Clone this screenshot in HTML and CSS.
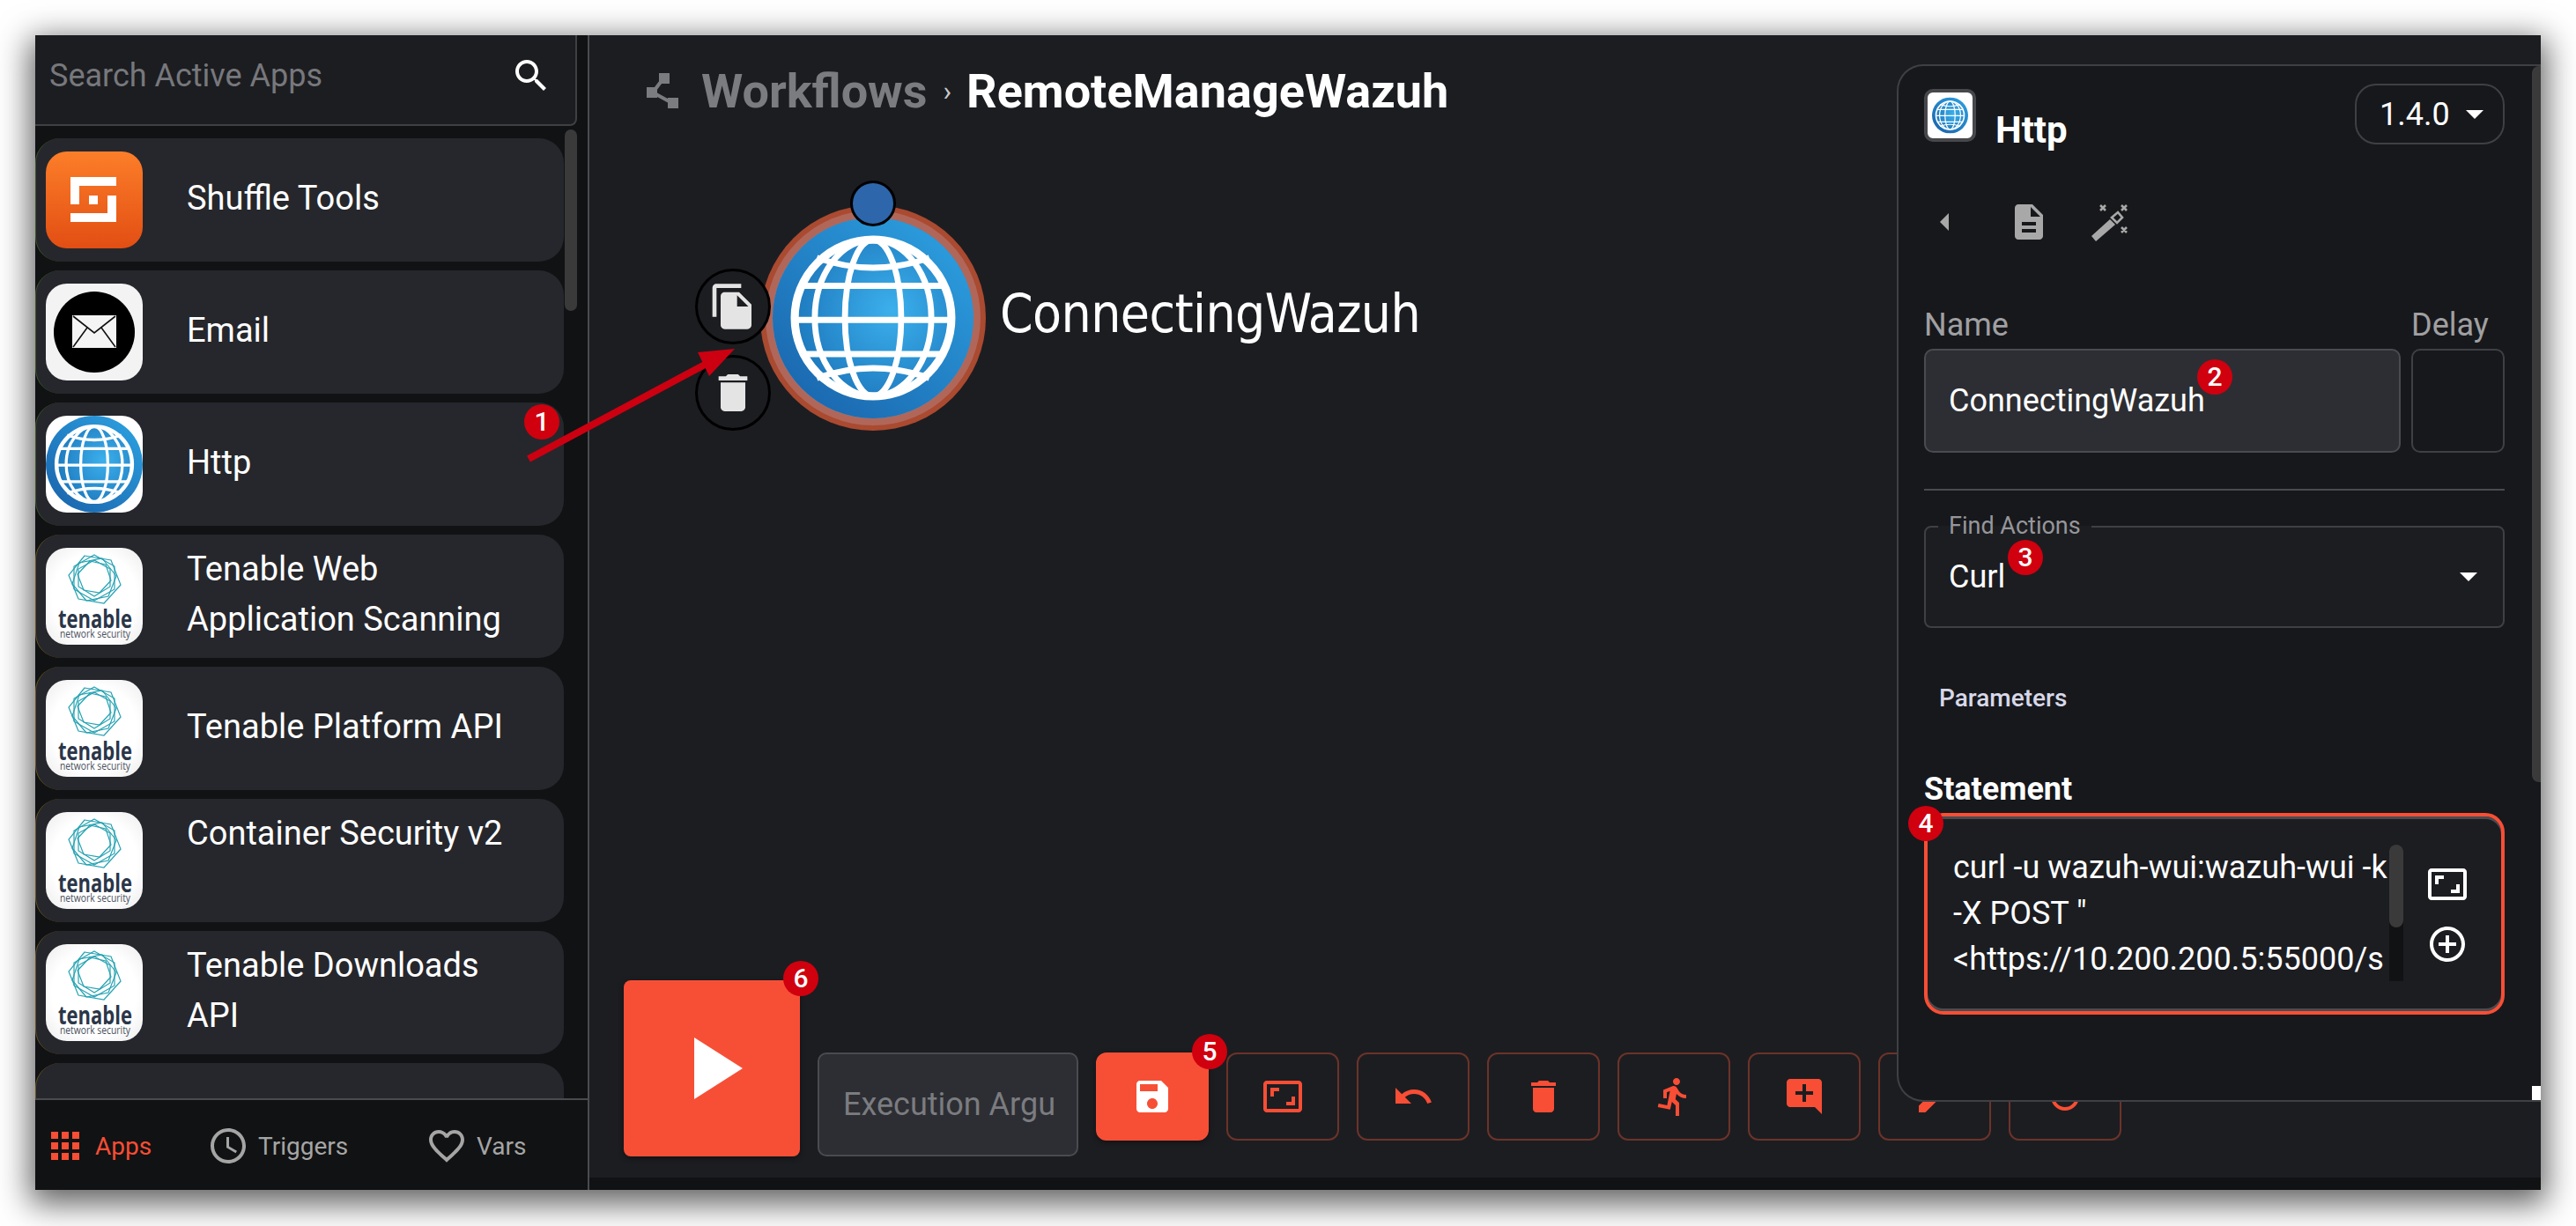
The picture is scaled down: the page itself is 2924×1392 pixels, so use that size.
FILE: index.html
```html
<!DOCTYPE html>
<html lang="en">
<head>
<meta charset="utf-8">
<title>RemoteManageWazuh</title>
<link rel="stylesheet" href="styles.css">
</head>
<body>
<svg class="defs" width="0" height="0" aria-hidden="true">
  <defs>
    <radialGradient id="globeFill" cx="62%" cy="45%" r="60%">
      <stop offset="0" stop-color="#3cb0ec"/>
      <stop offset="1" stop-color="#1f7cc0"/>
    </radialGradient>
    <linearGradient id="ringFill" x1="0.85" y1="0.1" x2="0.15" y2="0.9">
      <stop offset="0" stop-color="#2b9bdc"/>
      <stop offset="1" stop-color="#1b69b0"/>
    </linearGradient>
    <symbol id="globe" viewBox="0 0 100 100">
      <circle cx="50" cy="50" r="50" fill="url(#ringFill)"/>
      <circle cx="50" cy="50" r="39" fill="url(#globeFill)" stroke="#fff" stroke-width="4"/>
      <g fill="none" stroke="#fff" stroke-width="3">
        <ellipse cx="50" cy="50" rx="14" ry="39"/>
        <ellipse cx="50" cy="50" rx="29" ry="39"/>
        <path d="M14 34H86M11 51H89M14 68H86M22 20q28 10 56 0M22 80q28-10 56 0"/>
      </g>
    </symbol>
    <symbol id="tenable" viewBox="0 0 110 110">
      <g fill="none" stroke="#27a3b3" stroke-width="1.2">
        <polygon points="44,9 74,14 85,42 66,63 37,58 26,31"/>
        <polygon points="55,8 78,21 78,47 55,60 32,47 32,21"/>
        <polygon points="64,12 80,32 71,55 46,60 30,41 38,17"/>
        <polygon points="55,14 73,24 73,44 55,55 37,44 37,24"/>
        <polygon points="50,15 68,19 74,37 61,51 43,48 36,30"/>
      </g>
      <text class="ten-main" x="56" y="91" text-anchor="middle" textLength="84" lengthAdjust="spacingAndGlyphs">tenable</text>
      <text class="ten-sub" x="56" y="102" text-anchor="middle" textLength="80" lengthAdjust="spacingAndGlyphs">network security</text>
    </symbol>
  </defs>
</svg>

<div class="frame">
  <aside class="sidebar">
    <div class="search">
      <span class="search-text">Search Active Apps</span>
      <svg class="ic48 white" viewBox="0 0 24 24"><path d="M15.5 14h-.79l-.28-.27C15.41 12.59 16 11.11 16 9.5 16 5.91 13.09 3 9.5 3S3 5.91 3 9.5 5.91 16 9.5 16c1.61 0 3.09-.59 4.23-1.57l.27.28v.79l5 4.99L20.49 19l-4.99-5zm-6 0C7.01 14 5 11.99 5 9.5S7.01 5 9.5 5 14 7.01 14 9.5 11.99 14 9.5 14z"/></svg>
    </div>
    <div class="list-area">
      <div class="app-list">
        <div class="app-item edge-green">
          <svg class="app-icon" viewBox="0 0 110 110">
            <defs><linearGradient id="shuf" x1="0" y1="0" x2="0" y2="1"><stop offset="0" stop-color="#fc7e29"/><stop offset="1" stop-color="#e24e13"/></linearGradient></defs>
            <rect width="110" height="110" fill="url(#shuf)"/>
            <path fill="#fff" d="M28 29H80V39H38V60H28ZM49 50H59V60H49ZM70 50H80V80H28V70H70Z"/>
          </svg>
          <span class="app-name">Shuffle Tools</span>
        </div>
        <div class="app-item edge-green">
          <svg class="app-icon" viewBox="0 0 110 110">
            <rect width="110" height="110" fill="#f3f3f3"/>
            <circle cx="55" cy="55" r="46" fill="#000"/>
            <rect x="30" y="36" width="50" height="37" fill="#f4f4f4"/>
            <path d="M31 37 55 56 79 37M31 72 47 50M79 72 63 50" fill="none" stroke="#111" stroke-width="1.6"/>
          </svg>
          <span class="app-name">Email</span>
        </div>
        <div class="app-item edge-green">
          <svg class="app-icon white-bg" viewBox="0 0 100 100"><use href="#globe"/></svg>
          <span class="app-name">Http</span>
        </div>
        <div class="app-item edge-amber">
          <svg class="app-icon ten-bg" viewBox="0 0 110 110"><use href="#tenable"/></svg>
          <span class="app-name">Tenable Web Application Scanning</span>
        </div>
        <div class="app-item edge-amber">
          <svg class="app-icon ten-bg" viewBox="0 0 110 110"><use href="#tenable"/></svg>
          <span class="app-name">Tenable Platform API</span>
        </div>
        <div class="app-item edge-amber top-text">
          <svg class="app-icon ten-bg" viewBox="0 0 110 110"><use href="#tenable"/></svg>
          <span class="app-name">Container Security v2</span>
        </div>
        <div class="app-item edge-amber">
          <svg class="app-icon ten-bg" viewBox="0 0 110 110"><use href="#tenable"/></svg>
          <span class="app-name">Tenable Downloads API</span>
        </div>
        <div class="app-item edge-amber"></div>
      </div>
      <div class="list-thumb"></div>
    </div>
    <nav class="tabs">
      <div class="tab active">
        <svg class="ic48" viewBox="0 0 24 24"><path d="M4 8h4V4H4v4zm6 12h4v-4h-4v4zm-6 0h4v-4H4v4zm0-6h4v-4H4v4zm6 0h4v-4h-4v4zm6-10v4h4V4h-4zm-6 4h4V4h-4v4zm6 6h4v-4h-4v4zm0 6h4v-4h-4v4z"/></svg>
        <span>Apps</span>
      </div>
      <div class="tab">
        <svg class="ic48" viewBox="0 0 24 24"><path d="M11.99 2C6.47 2 2 6.48 2 12s4.47 10 9.99 10C17.52 22 22 17.52 22 12S17.52 2 11.99 2zM12 20c-4.42 0-8-3.58-8-8s3.58-8 8-8 8 3.58 8 8-3.58 8-8 8zm.5-13H11v6l5.25 3.15.75-1.23-4.5-2.67z"/></svg>
        <span>Triggers</span>
      </div>
      <div class="tab">
        <svg class="ic48" viewBox="0 0 24 24"><path d="M16.5 3c-1.74 0-3.41.81-4.5 2.09C10.91 3.81 9.24 3 7.5 3 4.42 3 2 5.42 2 8.5c0 3.78 3.4 6.86 8.55 11.54L12 21.35l1.45-1.32C18.6 15.36 22 12.28 22 8.5 22 5.42 19.58 3 16.5 3zm-4.4 15.55l-.1.1-.1-.1C7.14 14.24 4 11.39 4 8.5 4 6.5 5.5 5 7.5 5c1.54 0 3.04.99 3.57 2.36h1.87C13.46 5.99 14.96 5 16.5 5c2 0 3.5 1.5 3.5 3.5 0 2.89-3.14 5.74-7.9 10.05z"/></svg>
        <span>Vars</span>
      </div>
    </nav>
  </aside>

  <main class="main">
    <header class="crumbs">
      <svg class="crumb-icon" viewBox="0 0 38 40">
        <path d="M8 22 20 6M8 22 30 34" stroke="#7b7c80" stroke-width="4" fill="none"/>
        <rect x="15" y="0" width="12" height="12" fill="#7b7c80"/>
        <rect x="1" y="16" width="12" height="12" fill="#7b7c80"/>
        <rect x="25" y="28" width="12" height="12" fill="#7b7c80"/>
      </svg>
      <span class="crumb-muted">Workflows</span>
      <span class="crumb-sep">›</span>
      <span class="crumb-title">RemoteManageWazuh</span>
    </header>

    <section class="canvas">
      <div class="node-ring">
        <svg class="node-globe" viewBox="0 0 100 100"><use href="#globe"/></svg>
      </div>
      <div class="node-port"></div>
      <div class="node-btn copy">
        <svg viewBox="0 0 24 24"><path fill="#e4e4e4" d="M16 1H4c-1.1 0-2 .9-2 2v14h2V3h12V1zm-1 4 6 6v10c0 1.1-.9 2-2 2H7.99C6.89 23 6 22.1 6 21l.01-14c0-1.1.89-2 1.99-2h7zm-1 7h5.5L14 6.5V12z"/></svg>
      </div>
      <div class="node-btn trash">
        <svg viewBox="0 0 24 24"><path fill="#e4e4e4" d="M6 19c0 1.1.9 2 2 2h8c1.1 0 2-.9 2-2V7H6v12zM19 4h-3.5l-1-1h-5l-1 1H5v2h14V4z"/></svg>
      </div>
      <div class="node-label">ConnectingWazuh</div>
    </section>

    <footer class="toolbar">
      <button class="play" type="button">
        <svg viewBox="0 0 55 70"><path fill="#fff" d="M0 0 55 35 0 70Z"/></svg>
      </button>
      <div class="exec-args"><span>Execution Argu</span></div>
      <div class="tools">
        <button class="tool solid" type="button"><svg class="ic48" viewBox="0 0 24 24"><path d="M17 3H5c-1.11 0-2 .9-2 2v14c0 1.1.89 2 2 2h14c1.1 0 2-.9 2-2V7l-4-4zm-5 16c-1.66 0-3-1.34-3-3s1.34-3 3-3 3 1.34 3 3-1.34 3-3 3zm3-10H5V5h10v4z"/></svg></button>
        <button class="tool" type="button"><svg class="ic48" viewBox="0 0 24 24"><path d="M19 12h-2v3h-3v2h5v-5zM7 9h3V7H5v5h2V9zm14-6H3c-1.1 0-2 .9-2 2v14c0 1.1.9 2 2 2h18c1.1 0 2-.9 2-2V5c0-1.1-.9-2-2-2zm0 16.01H3V4.99h18v14.02z"/></svg></button>
        <button class="tool" type="button"><svg class="ic48" viewBox="0 0 24 24"><path d="M12.5 8c-2.65 0-5.05.99-6.9 2.6L2 7v9h9l-3.62-3.62c1.39-1.16 3.16-1.88 5.12-1.88 3.54 0 6.55 2.31 7.6 5.5l2.37-.78C21.08 11.03 17.15 8 12.5 8z"/></svg></button>
        <button class="tool" type="button"><svg class="ic48" viewBox="0 0 24 24"><path d="M6 19c0 1.1.9 2 2 2h8c1.1 0 2-.9 2-2V7H6v12zM19 4h-3.5l-1-1h-5l-1 1H5v2h14V4z"/></svg></button>
        <button class="tool" type="button"><svg class="ic48" viewBox="0 0 24 24"><path d="M13.49 5.48c1.1 0 2-.9 2-2s-.9-2-2-2-2 .9-2 2 .9 2 2 2zm-3.6 13.9l1-4.4 2.1 2v6h2v-7.5l-2.1-2 .6-3c1.3 1.5 3.3 2.5 5.5 2.5v-2c-1.9 0-3.5-1-4.3-2.4l-1-1.6c-.4-.6-1-1-1.7-1-.3 0-.5.1-.8.1l-5.2 2.2v4.7h2v-3.4l1.8-.7-1.6 8.1-4.9-1-.4 2 7 1.4z"/></svg></button>
        <button class="tool" type="button"><svg class="ic48" viewBox="0 0 24 24"><path d="M21.99 4c0-1.1-.89-2-1.99-2H4c-1.1 0-2 .9-2 2v12c0 1.1.9 2 2 2h14l4 4-.01-18zM17 11h-4v4h-2v-4H7V9h4V5h2v4h4v2z"/></svg></button>
        <button class="tool" type="button"><svg class="ic48" viewBox="0 0 24 24"><path d="M3 17.25V21h3.75L17.81 9.94l-3.75-3.75L3 17.25zM20.71 7.04c.39-.39.39-1.02 0-1.41l-2.34-2.34c-.39-.39-1.02-.39-1.41 0l-1.83 1.83 3.75 3.75 1.83-1.83z"/></svg></button>
        <button class="tool" type="button"><svg class="ic48" viewBox="0 0 24 24"><path d="M17.65 6.35C16.2 4.9 14.21 4 12 4c-4.42 0-7.99 3.58-7.99 8s3.57 8 7.99 8c3.73 0 6.84-2.55 7.73-6h-2.08c-.82 2.33-3.04 4-5.65 4-3.31 0-6-2.69-6-6s2.69-6 6-6c1.66 0 3.14.69 4.22 1.78L13 11h7V4l-2.35 2.35z"/></svg></button>
      </div>
    </footer>
    <div class="main-strip"></div>
  </main>

  <section class="panel">
    <div class="panel-body">
      <div class="panel-head">
        <div class="panel-app">
          <div class="panel-logo"><svg viewBox="0 0 100 100"><use href="#globe"/></svg></div>
          <span class="panel-title">Http</span>
        </div>
        <div class="version"><span>1.4.0</span><i class="caret"></i></div>
      </div>
      <div class="panel-actions">
        <svg class="ic48" viewBox="0 0 24 24"><path d="M14 7l-5 5 5 5z" transform="translate(-1.5 0)"/></svg>
        <svg class="ic48" viewBox="0 0 24 24"><path d="M14 2H6c-1.1 0-1.99.9-1.99 2L4 20c0 1.1.89 2 1.99 2H18c1.1 0 2-.9 2-2V8l-6-6zm2 16H8v-2h8v2zm0-4H8v-2h8v2zm-3-5V3.5L18.5 9H13z"/></svg>
        <svg class="ic48" viewBox="0 0 48 48">
          <path d="M3 40 24 21l6 6L8 46Z"/>
          <path d="M26 19 33 13l5 6-6 6Z" fill="none" stroke="#a8a8a8" stroke-width="2.6"/>
          <path d="M13 5l6 6m0-6-6 6M37 5l6 6m0-6-6 6M37 30l6 6m0-6-6 6" stroke="#a8a8a8" stroke-width="2.6" fill="none"/>
        </svg>
      </div>
      <div class="field-row">
        <div class="field-name">
          <label class="field-label">Name</label>
          <div class="text-box filled">ConnectingWazuh</div>
        </div>
        <div class="field-delay">
          <label class="field-label">Delay</label>
          <div class="text-box"></div>
        </div>
      </div>
      <hr class="rule">
      <div class="select-box">
        <span class="legend">Find Actions</span>
        <span class="select-value">Curl</span>
        <i class="caret"></i>
      </div>
      <div class="params-title">Parameters</div>
      <div class="param-name">Statement</div>
      <div class="statement">
        <div class="statement-text">
          <div class="statement-line">curl -u wazuh-wui:wazuh-wui -k</div>
          <div class="statement-line">-X POST "</div>
          <div class="statement-line">&lt;https://10.200.200.5:55000/s</div>
        </div>
        <div class="statement-track"><div class="statement-thumb"></div></div>
        <div class="statement-icons">
          <svg class="ic48 white" viewBox="0 0 24 24"><path d="M19 12h-2v3h-3v2h5v-5zM7 9h3V7H5v5h2V9zm14-6H3c-1.1 0-2 .9-2 2v14c0 1.1.9 2 2 2h18c1.1 0 2-.9 2-2V5c0-1.1-.9-2-2-2zm0 16.01H3V4.99h18v14.02z"/></svg>
          <svg class="ic48 white" viewBox="0 0 24 24"><path d="M13 7h-2v4H7v2h4v4h2v-4h4v-2h-4V7zm-1-5C6.48 2 2 6.48 2 12s4.48 10 10 10 10-4.48 10-10S17.52 2 12 2zm0 18c-4.41 0-8-3.59-8-8s3.59-8 8-8 8 3.59 8 8-3.59 8-8 8z"/></svg>
        </div>
      </div>
    </div>
    <div class="panel-scroll"><div class="panel-thumb"></div><div class="panel-grip"></div></div>
  </section>

  <svg class="arrow" viewBox="0 0 240 140" width="240" height="140">
    <path d="M0 129 200 22" fill="none" stroke="#cc0011" stroke-width="8"/>
    <path fill="#cc0011" d="M234 4 192 8 205 35Z"/>
  </svg>
  <span class="badge b1">1</span>
  <span class="badge b2">2</span>
  <span class="badge b3">3</span>
  <span class="badge b4">4</span>
  <span class="badge b5">5</span>
  <span class="badge b6">6</span>
</div>
</body>
</html>
```

FILE: styles.css
```css
* { box-sizing: border-box; }
html, body { margin: 0; height: 100%; }
body {
  width: 2924px;
  height: 1392px;
  padding: 40px;
  background: #fff;
  overflow: hidden;
  font-family: Roboto, "Liberation Sans", sans-serif;
  color: #fff;
}
.defs { position: absolute; }
.ic48 { width: 48px; height: 48px; flex: none; fill: currentColor; display: block; }
.white { color: #fff; }

.frame {
  position: relative;
  display: flex;
  width: 2844px;
  height: 1311px;
  background: #1c1d21;
  box-shadow: 0 10px 34px 6px rgba(0, 0, 0, .62);
}

/* sidebar */
.sidebar {
  width: 629px;
  flex: none;
  display: flex;
  flex-direction: column;
  background: #111213;
  border-right: 2px solid #4a4b50;
}
.search {
  width: 615px;
  height: 103px;
  flex: none;
  display: flex;
  align-items: center;
  justify-content: space-between;
  padding: 0 26px 10px 16px;
  background: #1c1d21;
  border-right: 2px solid #3f4044;
  border-bottom: 2px solid #3f4044;
  border-bottom-right-radius: 8px;
}
.search-text { font-size: 36px; color: #77787c; }
.list-area {
  flex: 1;
  min-height: 0;
  display: flex;
  overflow: hidden;
  align-items: flex-start;
}
.app-list {
  width: 600px;
  flex: none;
  padding-top: 14px;
  display: flex;
  flex-direction: column;
  gap: 10px;
}
.app-item {
  height: 140px;
  flex: none;
  display: flex;
  align-items: center;
  padding: 0 30px 0 11px;
  gap: 50px;
  background: #26272c;
  border-radius: 28px;
  border-left: 1px solid transparent;
}
.edge-green { border-left-color: #3e5a2a; }
.edge-amber { border-left-color: #6a5520; }
.top-text .app-name { align-self: flex-start; padding-top: 11px; padding-bottom: 0; }
.app-icon {
  width: 110px;
  height: 110px;
  flex: none;
  border-radius: 24px;
  display: block;
}
.white-bg { background: #fff; }
.ten-bg { background: radial-gradient(circle at 50% 50%, #fff 62%, #ececec 100%); }
.ten-main { font: 700 29px "Open Sans", Roboto, sans-serif; fill: #2b3648; }
.ten-sub { font: 400 12px "Open Sans", Roboto, sans-serif; fill: #4a505c; }
.app-name { width: 390px; padding-bottom: 4px; font-size: 38px; line-height: 57px; color: #fff; }
.list-thumb {
  width: 14px;
  height: 206px;
  margin: 4px 0 0 1px;
  flex: none;
  background: #3a3a3b;
  border-radius: 7px;
}
.tabs {
  height: 104px;
  flex: none;
  display: grid;
  grid-template-columns: 185px 248px 1fr;
  align-items: center;
  padding: 2px 0 0 10px;
  background: #111213;
  border-top: 2px solid #4a4b50;
  color: #a5a5a5;
  font-size: 28px;
}
.tab { display: flex; align-items: center; gap: 10px; }
.tab.active { color: #f84e35; }

/* main */
.main {
  flex: 1;
  min-width: 0;
  display: flex;
  flex-direction: column;
}
.crumbs {
  height: 124px;
  flex: none;
  display: flex;
  align-items: center;
  padding: 2px 0 0 64px;
  font-size: 54px;
  font-weight: 700;
}
.crumb-icon { width: 38px; height: 40px; flex: none; margin-right: 25px; }
.crumb-muted { color: #7b7c80; }
.crumb-sep { color: #c9c9c9; font-size: 32px; font-weight: 400; margin: 0 17px 0 18px; }
.crumb-title { color: #fff; }
.canvas { position: relative; flex: 1; min-height: 0; }
.node-ring {
  position: absolute;
  left: 194px;
  top: 69px;
  width: 256px;
  height: 256px;
  border-radius: 50%;
  background: #aa4a30;
  padding: 14px;
}
.node-globe {
  display: block;
  width: 228px;
  height: 228px;
  border-radius: 50%;
  box-shadow: 0 0 0 8px #b0675a;
  background: #2b8fd4;
}
.node-port {
  position: absolute;
  left: 296px;
  top: 41px;
  width: 52px;
  height: 52px;
  border-radius: 50%;
  background: #2d66ab;
  border: 3px solid #000;
}
.node-btn {
  position: absolute;
  left: 120px;
  width: 86px;
  height: 86px;
  border-radius: 50%;
  background: #1c1d21;
  border: 3px solid #000;
  display: flex;
  align-items: center;
  justify-content: center;
}
.node-btn svg { width: 56px; height: 56px; display: block; }
.node-btn.copy { top: 141px; }
.node-btn.trash { top: 239px; }
.node-label {
  position: absolute;
  left: 466px;
  top: 157px;
  font: 400 60px/70px "DejaVu Sans Condensed", "DejaVu Sans", sans-serif;
  letter-spacing: -.6px;
  color: #fff;
  white-space: nowrap;
}
.toolbar {
  height: 224px;
  flex: none;
  display: flex;
  align-items: flex-start;
  padding-left: 39px;
}
.play {
  width: 200px;
  height: 200px;
  flex: none;
  border: 0;
  padding: 0 0 0 15px;
  border-radius: 8px;
  background: #f74f36;
  display: flex;
  align-items: center;
  justify-content: center;
  box-shadow: 0 2px 6px rgba(0, 0, 0, .4);
}
.play svg { width: 55px; height: 70px; display: block; }
.exec-args {
  width: 296px;
  height: 118px;
  flex: none;
  margin: 82px 20px 0 20px;
  padding: 0 27px;
  display: flex;
  align-items: center;
  overflow: hidden;
  background: #2d2e33;
  border: 2px solid #4a4b50;
  border-radius: 10px;
  font-size: 36px;
  color: #7b7c80;
  white-space: nowrap;
}
.tools { display: flex; gap: 20px; margin-top: 82px; }
.tool {
  width: 128px;
  height: 100px;
  flex: none;
  padding: 0;
  display: flex;
  align-items: center;
  justify-content: center;
  background: transparent;
  border: 2px solid #6c3329;
  border-radius: 12px;
  color: #f84e35;
}
.tool.solid { background: #f74f36; border-color: #f74f36; color: #fff; box-shadow: 0 2px 6px rgba(0, 0, 0, .4); }
.main-strip { height: 14px; flex: none; background: #111213; }

/* right panel */
.panel {
  position: absolute;
  left: 2113px;
  top: 33px;
  width: 731px;
  height: 1178px;
  display: flex;
  background: #17181c;
  border: 2px solid #3f4044;
  border-right: 0;
  border-radius: 30px 0 0 30px;
  overflow: hidden;
}
.panel-body { flex: 1; min-width: 0; padding: 20px 31px 0 29px; }
.panel-head { display: flex; justify-content: space-between; align-items: flex-start; }
.panel-app { display: flex; align-items: flex-start; padding-top: 6px; }
.panel-logo {
  width: 59px;
  height: 60px;
  padding: 5px;
  background: #fff;
  border: 4px solid #47484c;
  border-radius: 10px;
}
.panel-logo svg { display: block; width: 100%; height: 100%; }
.panel-title { margin: 22px 0 0 22px; font-size: 42px; line-height: 50px; font-weight: 700; }
.version {
  width: 170px;
  height: 69px;
  display: flex;
  align-items: center;
  padding-left: 26px;
  gap: 18px;
  border: 2px solid #3f4044;
  border-radius: 24px;
  font-size: 36px;
}
.caret {
  display: block;
  width: 0;
  height: 0;
  border-left: 10px solid transparent;
  border-right: 10px solid transparent;
  border-top: 10px solid #fff;
}
.panel-actions {
  display: flex;
  align-items: center;
  gap: 44px;
  height: 48px;
  margin-top: 55px;
  padding-left: 3px;
  color: #a8a8a8;
}
.field-row { display: flex; gap: 12px; margin-top: 73px; }
.field-name { width: 541px; flex: none; }
.field-delay { width: 106px; flex: none; }
.field-label { display: block; height: 47px; line-height: 40px; font-size: 36px; color: #a0a0a2; }
.text-box {
  height: 118px;
  border: 2px solid #4a4b50;
  border-radius: 10px;
  padding: 0 26px;
  display: flex;
  align-items: center;
  font-size: 36px;
}
.text-box.filled { background: #2d2e33; }
.field-delay .text-box { border-color: #3f4044; }
.rule { margin: 41px 0 0; height: 2px; border: 0; background: #4a4b50; }
.select-box {
  position: relative;
  height: 116px;
  margin-top: 40px;
  padding: 0 29px 0 26px;
  display: flex;
  align-items: center;
  justify-content: space-between;
  background: #1c1d21;
  border: 2px solid #3f4044;
  border-radius: 8px;
  font-size: 36px;
}
.legend {
  position: absolute;
  left: 14px;
  top: -17px;
  padding: 0 12px;
  line-height: 30px;
  font-size: 27px;
  color: #96969a;
  background: linear-gradient(#17181c 50%, #1c1d21 50%);
}
.params-title { margin: 64px 0 0 17px; font-size: 28px; line-height: 32px; font-weight: 500; color: #d8d8e8; }
.param-name { margin-top: 67px; font-size: 36px; line-height: 40px; font-weight: 700; }
.statement {
  height: 229px;
  margin-top: 7px;
  display: flex;
  align-items: flex-start;
  padding: 32px 0 0 29px;
  background: #1c1d21;
  border: 4px solid #f84e35;
  border-radius: 22px;
  box-shadow: inset 0 3px 0 #4a4b50, inset 0 -3px 0 #4a4b50;
}
.statement-text { width: 495px; flex: none; overflow: hidden; white-space: nowrap; font-size: 36px; }
.statement-line { height: 52px; line-height: 52px; }
.statement-track { width: 16px; height: 155px; flex: none; background: #111213; border-radius: 8px 8px 0 0; }
.statement-thumb { height: 94px; background: #3a3a3b; border-radius: 8px; }
.statement-icons {
  flex: none;
  margin-left: 26px;
  margin-top: 21px;
  display: flex;
  flex-direction: column;
  gap: 20px;
}
.panel-scroll {
  position: relative;
  width: 10px;
  flex: none;
  background: #17181c;
}
.panel-thumb { height: 813px; background: #3a3a3b; border-radius: 8px 0 0 8px; }
.panel-grip { position: absolute; right: 0; bottom: 0; width: 10px; height: 16px; background: #fff; }

/* annotations */
.arrow { position: absolute; left: 560px; top: 352px; overflow: visible; }
.badge {
  position: absolute;
  width: 40px;
  height: 40px;
  border-radius: 50%;
  background: #d0000f;
  color: #fff;
  font-size: 30px;
  font-weight: 500;
  line-height: 40px;
  text-align: center;
}
.b1 { left: 555px; top: 419px; }
.b2 { left: 2454px; top: 368px; }
.b3 { left: 2239px; top: 573px; }
.b4 { left: 2126px; top: 875px; }
.b5 { left: 1313px; top: 1134px; }
.b6 { left: 849px; top: 1051px; }
```
